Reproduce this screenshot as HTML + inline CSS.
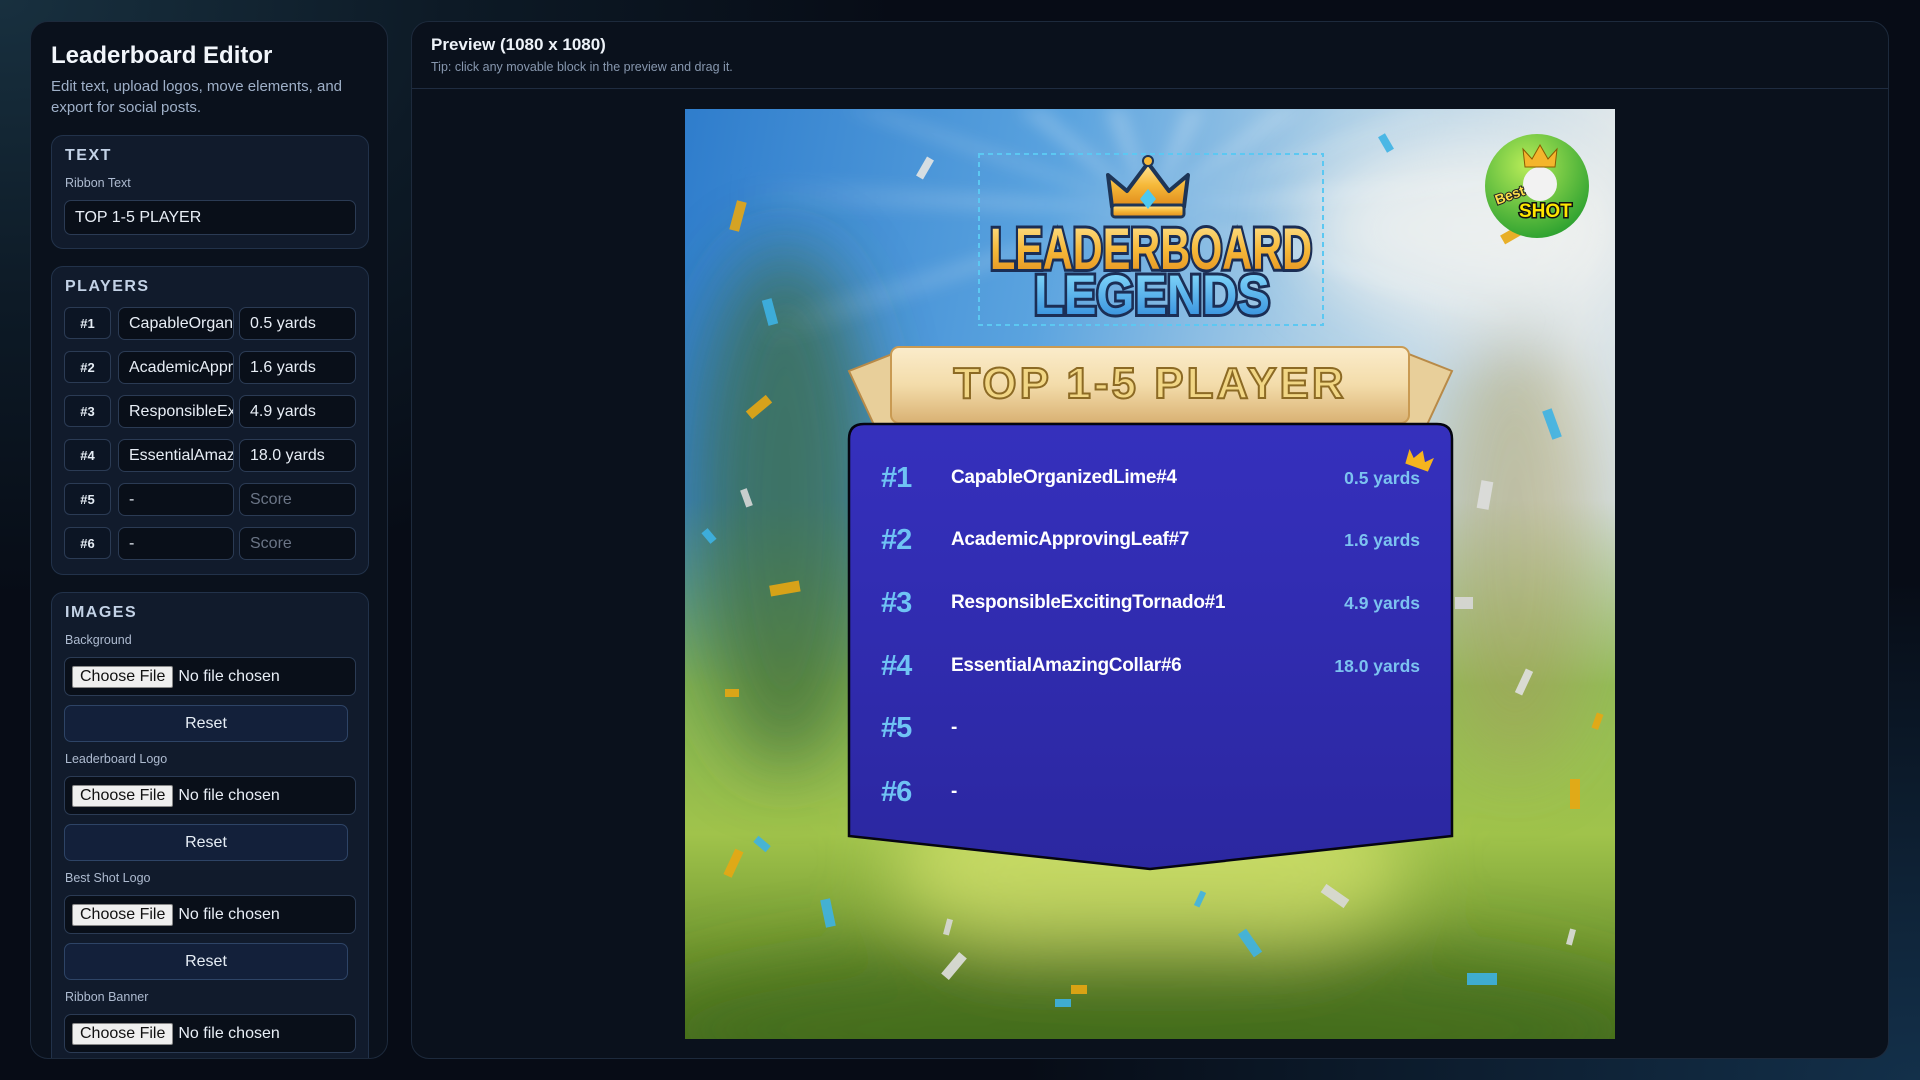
<!DOCTYPE html>
<html><head><meta charset="utf-8"><style>
*{box-sizing:border-box;margin:0;padding:0}
body{width:1920px;height:1080px;overflow:hidden;font-family:"Liberation Sans",sans-serif;background:radial-gradient(ellipse 900px 600px at 0 0,#18303f 0%,#0d1a26 50%,transparent 100%),radial-gradient(ellipse 900px 500px at 1920px 1080px,#13304a 0%,transparent 100%),#070c16;position:relative;color:#e6edf5}
.abs{position:absolute}
.side{left:30px;top:21px;width:358px;height:1038px;background:#0a111c;border:1px solid #1d2a3c;border-radius:18px;overflow:hidden}
.sec{position:absolute;left:20px;width:318px;background:#111b2c;border:1px solid #22324a;border-radius:12px}
.h{position:absolute;left:13px;font-weight:bold;font-size:16px;letter-spacing:1.5px;color:#c3d2e6}
.lbl{position:absolute;left:13px;font-size:12.5px;color:#aebbd0}
.inp{position:absolute;background:#090f19;border:1px solid #2b3b54;border-radius:7px;font-size:16px;color:#e8eef6;padding-left:10px;display:flex;align-items:center;white-space:nowrap;overflow:hidden}
.rk{position:absolute;left:13px;width:47px;height:32px;border:1px solid #2b3b54;border-radius:6px;background:#0c1524;font-weight:bold;font-size:13px;display:flex;align-items:center;justify-content:center;color:#e6edf5}
.file{left:13px;width:292px;height:39px;padding-left:7px}
.cf{background:#efefef;color:#111;border:1px solid #888;border-radius:2px;font-size:16px;padding:1px 7px;margin-right:5px}
.rst{position:absolute;left:13px;width:284px;height:37px;background:#13203a;border:1px solid #2e4466;border-radius:7px;display:flex;align-items:center;justify-content:center;font-size:16px;color:#e6edf5}
.main{left:411px;top:21px;width:1478px;height:1038px;background:#0a111c;border:1px solid #1d2a3c;border-radius:18px;overflow:hidden}
.cv{left:273px;top:87px;width:930px;height:930px;overflow:hidden;
background:
linear-gradient(180deg,rgba(0,0,0,0) 0%,rgba(0,0,0,0) 42%,rgba(140,185,70,.9) 62%,rgba(160,195,75,1) 78%,rgba(80,120,30,1) 100%),
linear-gradient(100deg,#2f7dcc 0%,#5aa3df 35%,#a9cde6 60%,#dfe7ea 85%,#cfdde6 100%)}
.row{position:absolute;left:0;width:603px;height:40px;display:flex;align-items:center}
.rn{position:absolute;left:32px;font-size:29px;font-weight:bold;color:#6fc3f4;letter-spacing:-1px}
.nm{position:absolute;left:102px;font-size:19px;font-weight:bold;color:#fff;letter-spacing:-.3px}
.sc{position:absolute;right:32px;font-size:17.5px;font-weight:bold;color:#7cc2f0}
</style></head><body>

<div class="abs side">
 <div class="abs" style="left:20px;top:20px;font-size:24px;font-weight:bold;color:#f2f6fb">Leaderboard Editor</div>
 <div class="abs" style="left:20px;top:54px;width:320px;font-size:15px;line-height:21px;color:#9fb0c8">Edit text, upload logos, move elements, and export for social posts.</div>

 <div class="sec" style="top:113px;height:114px">
  <div class="h" style="top:11px">TEXT</div>
  <div class="lbl" style="top:40px">Ribbon Text</div>
  <div class="inp" style="left:12px;top:64px;width:292px;height:35px">TOP 1-5 PLAYER</div>
 </div>

 <div class="sec" style="top:244px;height:309px">
  <div class="h" style="top:11px">PLAYERS</div>
  <div class="rk" style="top:40px;left:12px">#1</div><div class="inp" style="left:66px;top:40px;width:116px;height:33px">CapableOrganizedLime#4</div><div class="inp" style="left:187px;top:40px;width:117px;height:33px">0.5 yards</div>
  <div class="rk" style="top:84px;left:12px">#2</div><div class="inp" style="left:66px;top:84px;width:116px;height:33px">AcademicApprovingLeaf#7</div><div class="inp" style="left:187px;top:84px;width:117px;height:33px">1.6 yards</div>
  <div class="rk" style="top:128px;left:12px">#3</div><div class="inp" style="left:66px;top:128px;width:116px;height:33px">ResponsibleExcitingTornado#1</div><div class="inp" style="left:187px;top:128px;width:117px;height:33px">4.9 yards</div>
  <div class="rk" style="top:172px;left:12px">#4</div><div class="inp" style="left:66px;top:172px;width:116px;height:33px">EssentialAmazingCollar#6</div><div class="inp" style="left:187px;top:172px;width:117px;height:33px">18.0 yards</div>
  <div class="rk" style="top:216px;left:12px">#5</div><div class="inp" style="left:66px;top:216px;width:116px;height:33px">-</div><div class="inp" style="left:187px;top:216px;width:117px;height:33px;color:#6b7586">Score</div>
  <div class="rk" style="top:260px;left:12px">#6</div><div class="inp" style="left:66px;top:260px;width:116px;height:33px">-</div><div class="inp" style="left:187px;top:260px;width:117px;height:33px;color:#6b7586">Score</div>
 </div>

 <div class="sec" style="top:570px;height:520px">
  <div class="h" style="top:11px">IMAGES</div>
  <div class="lbl" style="top:40px">Background</div>
  <div class="inp file" style="top:64px;left:12px"><span class="cf">Choose File</span>No file chosen</div>
  <div class="rst" style="top:112px;left:12px">Reset</div>
  <div class="lbl" style="top:159px">Leaderboard Logo</div>
  <div class="inp file" style="top:183px;left:12px"><span class="cf">Choose File</span>No file chosen</div>
  <div class="rst" style="top:231px;left:12px">Reset</div>
  <div class="lbl" style="top:278px">Best Shot Logo</div>
  <div class="inp file" style="top:302px;left:12px"><span class="cf">Choose File</span>No file chosen</div>
  <div class="rst" style="top:350px;left:12px">Reset</div>
  <div class="lbl" style="top:397px">Ribbon Banner</div>
  <div class="inp file" style="top:421px;left:12px"><span class="cf">Choose File</span>No file chosen</div>
 </div>
</div>

<div class="abs main">
 <div class="abs" style="left:19px;top:13px;font-size:17px;font-weight:bold;color:#eef3f9">Preview (1080 x 1080)</div>
 <div class="abs" style="left:19px;top:38px;font-size:12.5px;color:#8797ae">Tip: click any movable block in the preview and drag it.</div>
 <div class="abs" style="left:0;top:66px;width:1478px;height:1px;background:#1f2c40"></div>

 <div class="abs cv">
  <svg class="abs" style="left:0;top:0" width="930" height="930">
   <defs>
    <filter id="bl" x="-50%" y="-50%" width="200%" height="200%"><feGaussianBlur stdDeviation="35"/></filter>
    <filter id="bl2" x="-20%" y="-20%" width="140%" height="140%"><feGaussianBlur stdDeviation="8"/></filter>
    <radialGradient id="ray" cx="465" cy="100" r="420" gradientUnits="userSpaceOnUse"><stop offset="0" stop-color="#fff" stop-opacity=".3"/><stop offset="1" stop-color="#fff" stop-opacity="0"/></radialGradient>
    <linearGradient id="gold" x1="0" y1="0" x2="0" y2="1"><stop offset="0" stop-color="#ffe79a"/><stop offset=".5" stop-color="#f6b93a"/><stop offset="1" stop-color="#e08a1a"/></linearGradient>
    <linearGradient id="blu" x1="0" y1="0" x2="0" y2="1"><stop offset="0" stop-color="#8fe3ff"/><stop offset="1" stop-color="#2b86d9"/></linearGradient>
    <linearGradient id="rib" x1="0" y1="0" x2="0" y2="1"><stop offset="0" stop-color="#fbeccb"/><stop offset=".5" stop-color="#f3dcaa"/><stop offset="1" stop-color="#d9b173"/></linearGradient>
    <linearGradient id="board" x1="0" y1="0" x2="0" y2="1"><stop offset="0" stop-color="#3530bd"/><stop offset="1" stop-color="#2b27a0"/></linearGradient>
    <radialGradient id="gb" cx=".4" cy=".3" r=".8"><stop offset="0" stop-color="#b8ec58"/><stop offset="1" stop-color="#1f9a2c"/></radialGradient>
   </defs>
   <g filter="url(#bl)">
    <ellipse cx="100" cy="400" rx="90" ry="260" fill="#3d6a36" opacity=".7"/>
    <ellipse cx="830" cy="440" rx="80" ry="220" fill="#a39a5b" opacity=".5"/>
    <ellipse cx="780" cy="120" rx="160" ry="90" fill="#f4f4f0" opacity=".8"/>
    <ellipse cx="465" cy="760" rx="260" ry="90" fill="#e6ee78" opacity=".6"/>
    <ellipse cx="465" cy="920" rx="520" ry="90" fill="#3f6a1c" opacity=".7"/>
   </g>
   <g fill="url(#ray)" filter="url(#bl2)">
    <polygon points="465,100 330,0 360,0"/><polygon points="465,100 420,0 440,0"/><polygon points="465,100 500,0 520,0"/><polygon points="465,100 590,0 620,0"/><polygon points="465,100 0,60 0,100"/><polygon points="465,100 930,40 930,80"/><polygon points="465,100 150,0 200,0"/><polygon points="465,100 730,0 780,0"/><polygon points="465,100 0,230 0,270"/><polygon points="465,100 930,220 930,260"/>
   </g>
   <g opacity=".9">
    <rect x="48" y="92" width="10" height="30" fill="#e8a812" transform="rotate(15 53 107)"/>
    <rect x="236" y="48" width="8" height="22" fill="#e7e7e4" transform="rotate(30 240 59)"/>
    <rect x="80" y="190" width="10" height="26" fill="#3eb3e5" transform="rotate(-15 85 203)"/>
    <rect x="69" y="285" width="10" height="26" fill="#e8a812" transform="rotate(50 74 298)"/>
    <rect x="58" y="380" width="7" height="18" fill="#d8d8d8" transform="rotate(-20 61 389)"/>
    <rect x="20" y="420" width="8" height="14" fill="#3eb3e5" transform="rotate(-40 24 427)"/>
    <rect x="85" y="474" width="30" height="11" fill="#e8a812" transform="rotate(-10 100 480)"/>
    <rect x="40" y="580" width="14" height="8" fill="#e8a812"/>
    <rect x="625" y="240" width="30" height="10" fill="#d0d0d0"/>
    <rect x="697" y="25" width="8" height="18" fill="#3eb3e5" transform="rotate(-30 701 34)"/>
    <rect x="816" y="120" width="24" height="10" fill="#e8a812" transform="rotate(-30 828 125)"/>
    <rect x="862" y="300" width="10" height="30" fill="#3eb3e5" transform="rotate(-20 867 315)"/>
    <rect x="794" y="372" width="12" height="28" fill="#dedede" transform="rotate(10 800 386)"/>
    <rect x="770" y="488" width="18" height="12" fill="#d8d8d8"/>
    <rect x="835" y="560" width="8" height="26" fill="#e0e0e0" transform="rotate(25 839 573)"/>
    <rect x="909" y="604" width="7" height="16" fill="#e8a812" transform="rotate(20 912 612)"/>
    <rect x="885" y="670" width="10" height="30" fill="#e8a812"/>
    <rect x="44" y="740" width="9" height="28" fill="#e8a812" transform="rotate(25 48 754)"/>
    <rect x="73" y="727" width="8" height="16" fill="#3eb3e5" transform="rotate(-50 77 735)"/>
    <rect x="138" y="790" width="10" height="28" fill="#3eb3e5" transform="rotate(-12 143 804)"/>
    <rect x="260" y="810" width="6" height="16" fill="#d8d8d8" transform="rotate(15 263 818)"/>
    <rect x="264" y="843" width="10" height="28" fill="#e0e0e0" transform="rotate(40 269 857)"/>
    <rect x="512" y="782" width="6" height="16" fill="#3eb3e5" transform="rotate(25 515 790)"/>
    <rect x="560" y="820" width="10" height="28" fill="#3eb3e5" transform="rotate(-35 565 834)"/>
    <rect x="645" y="773" width="10" height="28" fill="#dadada" transform="rotate(-55 650 787)"/>
    <rect x="782" y="864" width="30" height="12" fill="#3eb3e5"/>
    <rect x="386" y="876" width="16" height="9" fill="#e8a812"/>
    <rect x="370" y="890" width="16" height="8" fill="#3eb3e5"/>
    <rect x="883" y="820" width="6" height="16" fill="#ddd" transform="rotate(15 886 828)"/>
   </g>
   <rect x="294" y="45" width="344" height="171" fill="none" stroke="#5cc8f2" stroke-width="2" stroke-dasharray="5 4"/>
   <g transform="translate(463,82)">
    <path d="M-36,16 L-40,-16 L-21,0 L0,-28 L21,0 L40,-16 L36,16 Z" fill="url(#gold)" stroke="#1d3557" stroke-width="4" stroke-linejoin="round"/>
    <rect x="-36" y="14" width="72" height="12" rx="3" fill="url(#gold)" stroke="#1d3557" stroke-width="3"/>
    <path d="M0,-2 L8,8 L0,18 L-8,8 Z" fill="#4ec9f0"/>
    <circle cx="0" cy="-30" r="5" fill="#f6b93a" stroke="#1d3557" stroke-width="2"/>
   </g>
   <text x="466" y="160" text-anchor="middle" font-family="Liberation Sans" font-weight="bold" font-size="58" fill="url(#gold)" stroke="#1b2e55" stroke-width="6" paint-order="stroke" textLength="322" lengthAdjust="spacingAndGlyphs">LEADERBOARD</text>
   <text x="467" y="205" text-anchor="middle" font-family="Liberation Sans" font-weight="bold" font-size="56" fill="url(#blu)" stroke="#1b2e55" stroke-width="6" paint-order="stroke" textLength="236" lengthAdjust="spacingAndGlyphs">LEGENDS</text>
   <circle cx="852" cy="77" r="52" fill="url(#gb)"/>
   <circle cx="855" cy="75" r="17" fill="#f2f2f2"/>
   <path d="M840,58 L838,40 L847,50 L855,36 L863,50 L872,40 L870,58 Z" fill="#f4b52c" stroke="#8a5a00" stroke-width="1"/>
   <text x="810" y="92" font-family="Liberation Sans" font-weight="bold" font-size="14" fill="#ffe04a" stroke="#222" stroke-width="2" paint-order="stroke" transform="rotate(-20 822 88)">Best</text>
   <text x="834" y="108" font-family="Liberation Sans" font-weight="bold" font-size="19" fill="#ffe600" stroke="#111" stroke-width="3" paint-order="stroke">SHOT</text>
   <polygon points="164,262 210,244 230,330 190,318" fill="#e8cf9a" stroke="#b88a48" stroke-width="2"/>
   <polygon points="767,262 721,244 701,330 741,318" fill="#e8cf9a" stroke="#b88a48" stroke-width="2"/>
   <rect x="206" y="238" width="518" height="76" rx="8" fill="url(#rib)" stroke="#c99a52" stroke-width="2"/>
   <text x="465" y="289" text-anchor="middle" font-family="Liberation Sans" font-weight="bold" font-size="44" fill="#f1d684" stroke="#8c6a24" stroke-width="2" letter-spacing="3">TOP 1-5 PLAYER</text>
   <path d="M164,727 L164,330 Q164,315 179,315 L752,315 Q767,315 767,330 L767,727 L465,760 Z" fill="url(#board)" stroke="#050510" stroke-width="2.5"/>
   <g transform="translate(734,352) rotate(20)"><path d="M-12,7 L-13,-8 L-6,-1 L0,-11 L6,-1 L13,-8 L12,7 Z" fill="#f6b41e"/></g>
  </svg>
  <div class="abs" style="left:164px;top:0;width:603px;height:760px">
   <div class="row" style="top:349px"><span class="rn">#1</span><span class="nm">CapableOrganizedLime#4</span><span class="sc">0.5 yards</span></div>
   <div class="row" style="top:411px"><span class="rn">#2</span><span class="nm">AcademicApprovingLeaf#7</span><span class="sc">1.6 yards</span></div>
   <div class="row" style="top:474px"><span class="rn">#3</span><span class="nm">ResponsibleExcitingTornado#1</span><span class="sc">4.9 yards</span></div>
   <div class="row" style="top:537px"><span class="rn">#4</span><span class="nm">EssentialAmazingCollar#6</span><span class="sc">18.0 yards</span></div>
   <div class="row" style="top:599px"><span class="rn">#5</span><span class="nm">-</span></div>
   <div class="row" style="top:663px"><span class="rn">#6</span><span class="nm">-</span></div>
  </div>
 </div>
</div>
</body></html>
